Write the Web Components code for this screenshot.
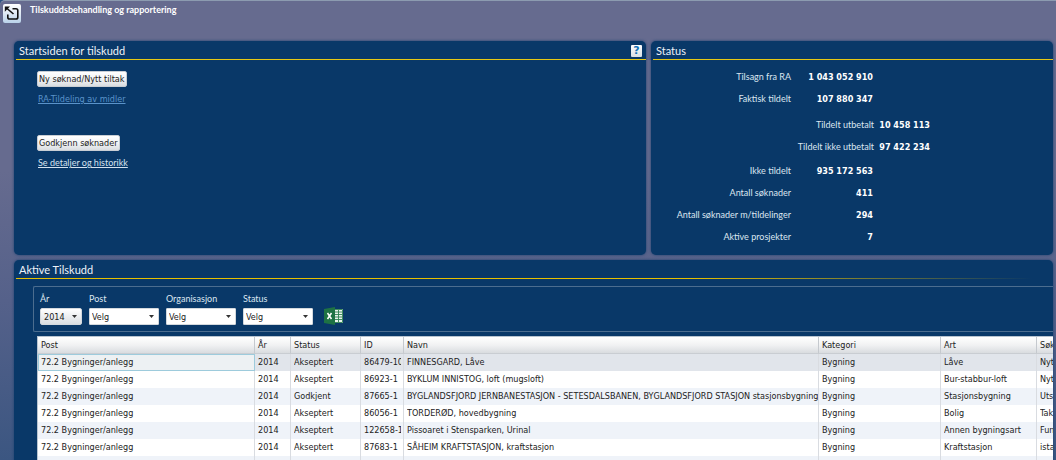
<!DOCTYPE html>
<html lang="no">
<head>
<meta charset="utf-8">
<title>Tilskuddsbehandling og rapportering</title>
<style>
body {
  margin: 0;
  height: 100vh;
  overflow: hidden;
  font: 9px/12px "DejaVu Sans Condensed", "DejaVu Sans", sans-serif;
  color: #fff;
  --head-font: Lato, "Open Sans", sans-serif;
  --panel: #093868;
  background: #2f5283;
}
</style>
</head>
<body>
<grant-app></grant-app>
<script>
class Base extends HTMLElement {
  constructor() {
    super();
    this.attachShadow({ mode: 'open' }).innerHTML = this.render();
  }
  render() { return ''; }
}

customElements.define('app-header', class extends Base {
  render() {
    return `<style>
      :host { display: flex; gap: 9px; padding: 3px 3px 0; height: 35px; box-sizing: border-box; }
      button { width: 18px; height: 19px; padding: 0; border: 0; border-radius: 2px; background: linear-gradient(#fff, #dfe9f4 50%, #b9d2ea); }
      svg { display: block; width: 18px; height: 19px; }
      h1 { margin: 0; font: bold 9px/12px var(--head-font); }
    </style>
    <button aria-label="Tilbake"><svg viewBox="0 0 18 19" fill="none" stroke="#111" stroke-width="1.6">
      <path d="M9.500 4.800H13Q14.800 4.800 14.800 6.600V13.200Q14.800 15 13 15H6.600Q4.800 15 4.800 13.200V10.500M10.500 10L4 4.500"/>
      <path d="M1.800 2.500H7L1.800 7.700Z" fill="#111" stroke="none"/></svg></button>
    <h1><slot></slot></h1>`;
  }
});

customElements.define('app-panel', class extends Base {
  render() {
    return `<style>
      :host { display: flex; flex-direction: column; background: var(--panel); border-radius: 5px; box-shadow: 0 0 3px #1b4070; min-width: 0; }
      header { display: flex; justify-content: space-between; height: 18px; margin: 0 0 0 2px; padding: 1px 4px 0 3px; background: var(--rule, linear-gradient(#e6c814, #e6c814)) bottom / 100% 1px no-repeat; }
      h2 { margin: 0; font: 11px/18px var(--head-font); color: #eef3f8; white-space: nowrap; }
    </style>
    <header><h2><slot name="title"></slot></h2><slot name="tool"></slot></header>
    <slot></slot>`;
  }
});

customElements.define('help-button', class extends Base {
  render() {
    return `<style>
      :host { display: block; }
      button { display: block; width: 11px; height: 12px; margin-top: 3px; padding: 0; border: 0; border-radius: 1px; background: linear-gradient(#fff, #d8dfe6); color: #1272b8; font: bold 11px/12px "DejaVu Sans", sans-serif; }
    </style><button aria-label="Hjelp">?</button>`;
  }
});

customElements.define('start-actions', class extends Base {
  render() {
    return `<style>
      :host { display: flex; flex-direction: column; align-items: flex-start; gap: 30px; padding: 11px 23px; }
      div { display: flex; flex-direction: column; align-items: flex-start; gap: 6px; }
      button { height: 16px; padding: 0 1px; border: 1px solid #c9ced4; border-radius: 2px; background: linear-gradient(#fff, #f2f3f5 50%, #d9dde1); color: #222; font: inherit; line-height: 14px; white-space: nowrap; }
      a { margin-left: 1px; color: #d5e2ef; font: 9px/12px var(--head-font); }
      a.own { color: #5a93ca; font: inherit; }
    </style>
    <div><button>Ny søknad/Nytt tiltak</button><a class="own" href="#tildeling">RA-Tildeling av midler</a></div>
    <div><button>Godkjenn søknader</button><a href="#historikk">Se detaljer og historikk</a></div>`;
  }
});

customElements.define('status-figures', class extends Base {
  render() {
    const row = (l, v) => `<div class="row"><dt>${l}</dt><dd>${v}</dd></div>`;
    return `<style>
      :host { display: block; padding: 6px 0 7px; }
      dl { margin: 0; }
      .row { display: grid; grid-template-columns: 140px 82px; line-height: 22px; white-space: nowrap; }
      .sub { margin: 4px 0 2px; }
      .sub .row { grid-template-columns: 223px 56px; }
      dt { text-align: right; font-family: var(--head-font); color: #dce6f0; }
      dd { margin: 0; text-align: right; font-weight: bold; }
    </style>
    <dl>${row('Tilsagn fra RA', '1 043 052 910')}${row('Faktisk tildelt', '107 880 347')}
    <div class="sub">${row('Tildelt utbetalt', '10 458 113')}${row('Tildelt ikke utbetalt', '97 422 234')}</div>
    ${row('Ikke tildelt', '935 172 563')}${row('Antall søknader', '411')}${row('Antall søknader m/tildelinger', '294')}${row('Aktive prosjekter', '7')}</dl>`;
  }
});

customElements.define('filter-select', class extends Base {
  render() {
    return `<style>
      :host { display: block; width: 70px; }
      label { display: block; font: 9px/12px var(--head-font); color: #dce6f0; margin-bottom: 3px; }
      .box { display: grid; align-items: center; }
      select { grid-area: 1/1; appearance: none; width: 100%; height: 17px; padding: 0 2px; border: 1px solid #d4d9de; border-radius: 1px; background: #fff; color: #222; font: inherit; }
      :host([compact]) { width: 42px; }
      :host([compact]) select { padding: 0 3px; border-radius: 2px; background: linear-gradient(#fff, #dadee2); }
      svg { grid-area: 1/1; justify-self: end; margin-right: 5px; width: 5px; height: 3px; pointer-events: none; }
    </style>
    <label for="s">${this.getAttribute('label')}</label>
    <div class="box"><select id="s"><option>${this.getAttribute('value')}</option></select><svg viewBox="0 0 5 3"><path d="M0 0H5L2.500 3Z" fill="#333"/></svg></div>`;
  }
});

customElements.define('filter-bar', class extends Base {
  render() {
    return `<style>
      :host { display: flex; gap: 7px; align-items: flex-end; margin: 7px 0 4px 19px; padding: 6px; border: 1px solid #4c6d8f; border-right: 0; border-radius: 2px 0 0 2px; }
      button { margin-left: 4px; padding: 0; border: 0; background: none; }
      svg { display: block; width: 19px; height: 18px; }
    </style>
    <filter-select label="År" value="2014" compact></filter-select>
    <filter-select label="Post" value="Velg"></filter-select>
    <filter-select label="Organisasjon" value="Velg"></filter-select>
    <filter-select label="Status" value="Velg"></filter-select>
    <button aria-label="Eksporter til Excel"><svg viewBox="0 0 19 18">
      <path d="M10 2H19V16H10Z" fill="#e9f3ec"/>
      <path d="M10 2.500H18.500V15.500H10M11 5H18M11 7.500H18M11 10H18M11 12.500H18M14.500 3V15" stroke="#2c8050" stroke-width=".9" fill="none"/>
      <path d="M0 2L11 0V18L0 16Z" fill="#1e7244"/>
      <path d="M3.500 6L7.500 12M7.500 6L3.500 12" stroke="#fff" stroke-width="1.500"/></svg></button>`;
  }
});

customElements.define('grant-table', class extends Base {
  render() {
    const heads = ['Post', 'År', 'Status', 'ID', 'Navn', 'Kategori', 'Art', 'Søk'];
    const widths = [217, 36, 70, 43, 415, 122, 96, 30];
    const P = '72.2 Bygninger/anlegg', Y = '2014', B = 'Bygning';
    const rows = [
      [P, Y, 'Akseptert', '86479-10', 'FINNESGARD, Låve', B, 'Låve', 'Nyt'],
      [P, Y, 'Akseptert', '86923-1', 'BYKLUM INNISTOG, loft (mugsloft)', B, 'Bur-stabbur-loft', 'Nyt'],
      [P, Y, 'Godkjent', '87665-1', 'BYGLANDSFJORD JERNBANESTASJON - SETESDALSBANEN, BYGLANDSFJORD STASJON stasjonsbygning', B, 'Stasjonsbygning', 'Uts'],
      [P, Y, 'Akseptert', '86056-1', 'TORDERØD, hovedbygning', B, 'Bolig', 'Tak'],
      [P, Y, 'Akseptert', '122658-1', 'Pissoaret i Stensparken, Urinal', B, 'Annen bygningsart', 'Fun'],
      [P, Y, 'Akseptert', '87683-1', 'SÅHEIM KRAFTSTASJON, kraftstasjon', B, 'Kraftstasjon', 'ista'],
      [P, Y, 'Godkjent', '86931-1', 'Søndre garden', B, 'Bur-stabbur-loft', 'till']
    ];
    return `<style>
      :host { display: block; overflow: hidden; margin-left: 23px; background: #fff; color: #222; border: 1px solid #b8c4d0; border-width: 1px 0 0 1px; }
      table { table-layout: fixed; width: 1029px; border-collapse: separate; border-spacing: 0; }
      th, td { box-sizing: border-box; height: 17px; padding: 0 2px 0 3px; text-align: left; font-weight: normal; line-height: 15px; white-space: nowrap; overflow: hidden; border-right: 1px solid #d9dce1; }
      td:nth-child(5) { padding-right: 0; }
      span { display: block; overflow: hidden; }
      th { background: linear-gradient(#fff, #f1f2f3 50%, #d9dcdf); border-right-color: #c5c9ce; border-bottom: 1px solid #c9cdd2; }
      tr:nth-child(odd) td { background: #eff3f9; }
      tbody tr:first-child td { background: #e1e5eb; }
      tbody tr:first-child td:first-child { background: #edf1f3; border: 1px solid #9dcbdc; padding-left: 2px; }
    </style>
    <table><colgroup>${widths.map(w => `<col style="width:${w}px">`).join('')}</colgroup>
    <thead><tr>${heads.map(h => `<th>${h}</th>`).join('')}</tr></thead>
    <tbody>${rows.map(r => `<tr>${r.map(c => `<td><span>${c}</span></td>`).join('')}</tr>`).join('')}</tbody></table>`;
  }
});

customElements.define('grant-app', class extends Base {
  render() {
    return `<style>
      :host { display: block; min-height: 100vh; border-top: 1px solid #8c9bb0; border-radius: 5px 0 0 0; background: linear-gradient(#666b8f, #666b8f 170px, #55618a 300px, #3b5681 460px); }
      main { display: grid; grid-template-columns: 632fr 402fr; gap: 5px; padding: 5px 3px 0 14px; }
      app-panel { min-height: 214px; }
      .wide { grid-column: 1 / -1; --rule: linear-gradient(90deg, #e6c000 65%, #e6c00000 98%); }
    </style>
    <app-header>Tilskuddsbehandling og rapportering</app-header>
    <main>
      <app-panel><span slot="title">Startsiden for tilskudd</span><help-button slot="tool"></help-button><start-actions></start-actions></app-panel>
      <app-panel><span slot="title">Status</span><status-figures></status-figures></app-panel>
      <app-panel class="wide"><span slot="title">Aktive Tilskudd</span><filter-bar></filter-bar><grant-table></grant-table></app-panel>
    </main>`;
  }
});
</script>
</body>
</html>
